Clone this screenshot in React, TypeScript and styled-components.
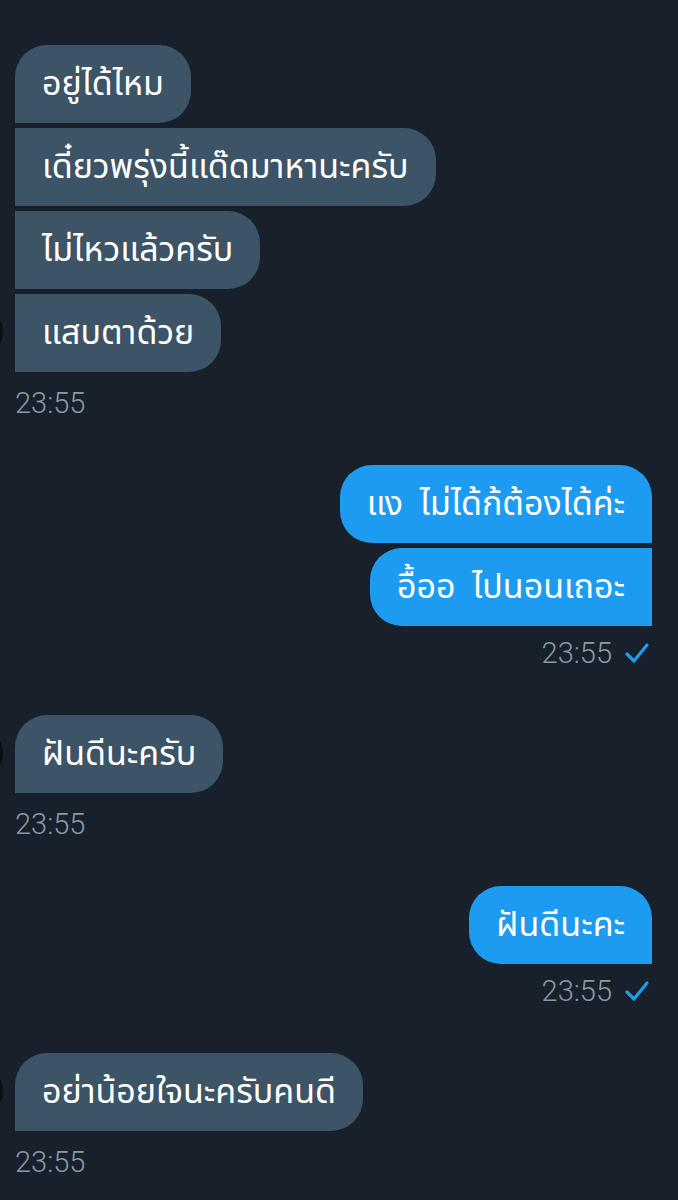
import React from "react";
import styled, { createGlobalStyle, css } from "styled-components";

const GlobalStyle = createGlobalStyle`
    html, body {
        margin: 0;
        padding: 0;
        background: #17202b;
    }
    body {
        font-family: "Noto Sans", "Noto Sans Thai", "Noto Sans Thai UI", Loma, Garuda, "Tlwg Typo", "DejaVu Sans", sans-serif;
        -webkit-font-smoothing: antialiased;
    }
`;

const Page = styled.div`
    width: 678px;
    min-height: 1200px;
    box-sizing: border-box;
    padding: 45px 26px 0 15px;
    background: #17202b;
    overflow: hidden;
    display: flex;
    flex-direction: column;
    gap: 45px;
`;

const Group = styled.div<{ $mine?: boolean }>`
    display: flex;
    flex-direction: column;
    align-items: ${(p) => (p.$mine ? "flex-end" : "flex-start")};
    gap: 5px;
`;

const Bubble = styled.div<{ $mine?: boolean; $first?: boolean; $avatar?: boolean }>`
    position: relative;
    height: 78px;
    box-sizing: border-box;
    padding: 0 27px;
    display: flex;
    align-items: center;
    font-size: 34px;
    word-spacing: 8px;
    color: #ffffff;
    white-space: nowrap;
    border-radius: 32px;

    ${(p) =>
        p.$mine
            ? css`
                  background: #1d9bf0;
                  border-bottom-right-radius: 0;
                  ${!p.$first && "border-top-right-radius: 0;"}
              `
            : css`
                  background: #3d5466;
                  border-bottom-left-radius: 0;
                  ${!p.$first && "border-top-left-radius: 0;"}
              `}

    ${(p) =>
        p.$avatar &&
        css`
            &::before {
                content: "";
                position: absolute;
                left: -56px;
                top: 14px;
                width: 44px;
                height: 48px;
                border-radius: 50%;
                background: #0b0f14;
            }
        `}
`;

const Meta = styled.div<{ $mine?: boolean }>`
    display: flex;
    align-items: center;
    gap: 12px;
    margin-top: ${(p) => (p.$mine ? "5px" : "9px")};
    height: 34px;
    padding-right: ${(p) => (p.$mine ? "2px" : "0")};
    font-family: Roboto, "Liberation Sans", sans-serif;
    font-weight: 300;
    font-size: 29px;
    color: #8899a6;
`;

const Check = () => (
    <svg width="26" height="24" viewBox="0 0 26 24" fill="none">
        <polyline
            points="3,13 10,20 23,4"
            stroke="#1d9bf0"
            strokeWidth="3.2"
            strokeLinecap="round"
            strokeLinejoin="round"
        />
    </svg>
);

interface IMessageGroup {
    mine?: boolean;
    texts: string[];
    time: string;
}

const groups: IMessageGroup[] = [
    {
        texts: ["อยู่ได้ไหม", "เดี๋ยวพรุ่งนี้แด๊ดมาหานะครับ", "ไม่ไหวแล้วครับ", "แสบตาด้วย"],
        time: "23:55",
    },
    { mine: true, texts: ["แง ไม่ได้ก้ต้องได้ค่ะ", "อื้ออ ไปนอนเถอะ"], time: "23:55" },
    { texts: ["ฝันดีนะครับ"], time: "23:55" },
    { mine: true, texts: ["ฝันดีนะคะ"], time: "23:55" },
    { texts: ["อย่าน้อยใจนะครับคนดี"], time: "23:55" },
];

const App: React.FC = () => {
    return (
        <>
            <GlobalStyle />
            <Page>
                {groups.map((g, gi) => (
                    <Group key={gi} $mine={g.mine}>
                        {g.texts.map((t, i) => (
                            <Bubble
                                key={i}
                                $mine={g.mine}
                                $first={i === 0}
                                $avatar={!g.mine && i === g.texts.length - 1}
                            >
                                {t}
                            </Bubble>
                        ))}
                        <Meta $mine={g.mine}>
                            <span>{g.time}</span>
                            {g.mine && <Check />}
                        </Meta>
                    </Group>
                ))}
            </Page>
        </>
    );
};

export default App;
